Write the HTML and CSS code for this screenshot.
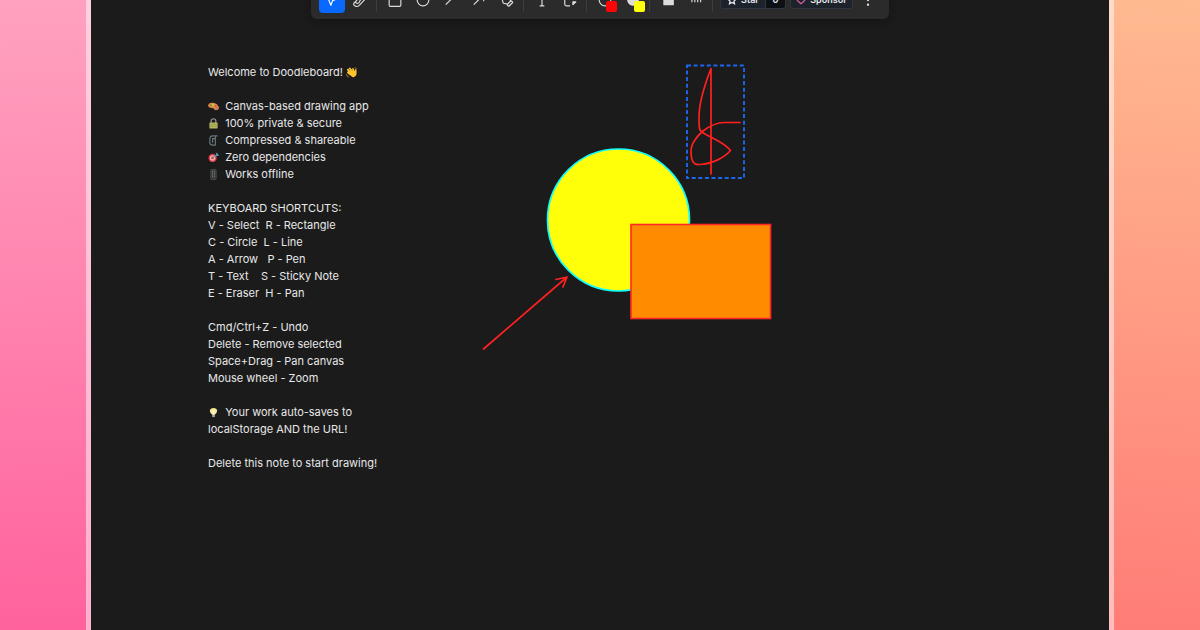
FILE: index.html
```html
<!DOCTYPE html>
<html lang="en">
<head>
<meta charset="utf-8">
<title>Doodleboard</title>
<link rel="stylesheet" href="styles.css">
</head>
<body class="backdrop">
<main class="window">
  <header class="toolbar" role="toolbar" aria-label="Drawing tools">
    <button class="tool tool-active" aria-label="Select"><svg class="icon" viewBox="0 0 24 24"><path d="M3 3l7 18 3-8 8-3z"/></svg></button>
    <button class="tool" aria-label="Eraser"><svg class="icon" viewBox="0 0 24 24"><path d="M23 8L12 20q-3 4-7 3-4-1-4-4 0-2 4-5L16 3M5 14q-1 4 3 4 3-1 4-5l7-7"/></svg></button>
    <span class="divider"></span>
    <button class="tool" aria-label="Rectangle"><svg class="icon" viewBox="0 0 24 24"><rect x="2" y="3" width="20" height="20" rx="2"/></svg></button>
    <button class="tool" aria-label="Circle"><svg class="icon" viewBox="0 0 24 24"><circle cx="12" cy="12" r="10"/></svg></button>
    <button class="tool" aria-label="Line"><svg class="icon" viewBox="0 0 24 24"><path d="M3 20L21 2"/></svg></button>
    <button class="tool" aria-label="Arrow"><svg class="icon" viewBox="0 0 24 24"><path d="M3 20L20 3M9 3h11v11"/></svg></button>
    <button class="tool" aria-label="Pen"><svg class="icon" viewBox="0 0 24 24"><path d="M15.707 22.293a1 1 0 0 1-1.414 0l-1.586-1.586a1 1 0 0 1 0-1.414l5.586-5.586a1 1 0 0 1 1.414 0l1.586 1.586a1 1 0 0 1 0 1.414zM18 14l-1.375-6.874a1 1 0 0 0-.746-.776L3.235 3.028a1 1 0 0 0-1.207 1.207L5.350 16.879a1 1 0 0 0 .776.746L13 19"/></svg></button>
    <span class="divider"></span>
    <button class="tool" aria-label="Text"><svg class="icon" viewBox="0 0 24 24"><path d="M4 6V3h16v3M12 3v19M8 22h8"/></svg></button>
    <button class="tool" aria-label="Sticky note"><svg class="icon" viewBox="0 0 24 24"><path d="M12 22H6q-3 0-3-3V3h19v7"/><path class="solid" d="M17 15h5l-5 5z"/></svg></button>
    <span class="divider"></span>
    <button class="tool" aria-label="Stroke color"><svg class="icon" viewBox="0 0 24 24"><circle cx="12" cy="12" r="10"/></svg><span class="swatch swatch-red"></span></button>
    <button class="tool" aria-label="Fill color"><svg class="icon" viewBox="0 0 24 24"><circle class="solid" cx="12" cy="12" r="9"/></svg><span class="swatch swatch-yellow"></span></button>
    <span class="divider"></span>
    <button class="tool" aria-label="Fill style"><svg class="icon" viewBox="0 0 24 24"><path class="solid" d="M5 5h16v15H5z"/></svg></button>
    <button class="tool" aria-label="Line style"><svg class="icon" viewBox="0 0 24 24"><path d="M4 8h17M5 12v4M10 12v4M15 12v4M20 12v4"/></svg></button>
    <span class="divider"></span>
    <span class="star-group"><a class="badge" href="#star"><svg class="badge-icon" viewBox="0 0 16 16"><path d="M8 2l2 4 4 1-3 3 1 4-4-2-4 2 1-4-3-3 4-1z"/></svg>Star</a><a class="badge badge-count" href="#stars">0</a></span>
    <a class="badge badge-sponsor" href="#sponsor"><svg class="badge-icon heart" viewBox="0 0 16 16"><path d="M8 14Q1 9 1 5q0-3 3-3 3 0 4 3 1-3 4-3 3 0 3 3 0 4-7 9z"/></svg>Sponsor</a>
    <button class="tool" aria-label="More"><svg class="icon" viewBox="0 0 24 24"><circle class="solid" cx="12" cy="4" r="1"/><circle class="solid" cx="12" cy="12" r="1"/><circle class="solid" cx="12" cy="20" r="1"/></svg></button>
  </header>

  <svg class="drawing" viewBox="91 0 700 360" role="img" aria-label="Drawing">
    <circle cx="618.5" cy="220" r="71" fill="#ffff0a" stroke="#1ff" stroke-width="1.7"/>
    <rect x="631" y="224.500" width="139.500" height="94" fill="#ff8c00" stroke="#ff2828" stroke-width="1.6"/>
    <path class="ink" d="M483.500 349L567 277M556 279.500L567 277L563 287"/>
    <path class="ink" d="M711 174V68.500C705 84 699 104 699 117C699 130 699 131 705 134C716 140 725 143 730.500 150.500C724 158 712 164 699 164.500C693 165 691 160 691 151C691 144 697 136 703 131C711 125 717 122.500 724 122.500H740"/>
    <rect x="687" y="65.500" width="57" height="112.500" fill="none" stroke="#1d66ee" stroke-width="1.9" stroke-dasharray="4 2.600"/>
  </svg>

  <p class="note">Welcome to Doodleboard! <svg class="emoji" viewBox="0 0 24 24" role="img" aria-label="waving hand"><path fill="#f9c22e" d="M2 5l3-2 5 6-4-7 3-1 6 7-2-5q2-2 4 0l2 6 1-4q3-1 3 2v9q-2 8-9 6L2 13q0-2 2-2L2 5z"/><path d="M1 16q1 5 5 6M19 1q3 1 4 4" fill="none" stroke="#b88a25" stroke-width="2"/></svg>

<svg class="emoji" viewBox="0 0 24 24" role="img" aria-label="palette"><path fill="#d98b45" d="M0 9q2-6 11-5 9 1 13 10 0 6-7 6-3 0-4-3-1-2-5-2-7 0-8-6z"/><circle cx="6" cy="9" r="2" fill="#4ba647"/><circle cx="11" cy="8" r="2" fill="#e9d33b"/><circle cx="17" cy="11" r="2" fill="#e34442"/><circle cx="19" cy="16" r="2" fill="#a65cd0"/></svg>  Canvas-based drawing app
<svg class="emoji" viewBox="0 0 24 24" role="img" aria-label="lock"><path d="M7 12V6q0-4 5-4t5 4v6" fill="none" stroke="#8b8e8c" stroke-width="3"/><rect x="3" y="10" width="18" height="13" rx="2" fill="#b4b661"/><path d="M4 14h16M4 18h16" stroke="#858946"/></svg>  100% private &amp; secure
<svg class="emoji" viewBox="0 0 24 24" role="img" aria-label="clamp"><path d="M21 2H9Q4 3 4 9v9q1 4 6 4h6V8h-6v9M16 2v20" fill="none" stroke="#66777b" stroke-width="2.500"/></svg>  Compressed &amp; shareable
<svg class="emoji" viewBox="0 0 24 24" role="img" aria-label="target"><circle cx="10" cy="13" r="9" fill="#d93d43"/><circle cx="10" cy="13" r="6" fill="#efb1b3"/><circle cx="10" cy="13" r="3" fill="#d93d43"/><path d="M10 13L19 6l-1-4 5 5-5 1" fill="#48a8c5" stroke="#48a8c5" stroke-width="2"/></svg>  Zero dependencies
<svg class="emoji" viewBox="0 0 24 24" role="img" aria-label="phone"><rect x="6" y="1" width="12" height="22" rx="2" fill="#323536" stroke="#6b7070"/><path d="M9 5h2m2 0h2M9 9h2m2 0h2M9 13h2m2 0h2M9 17h2m2 0h2" stroke="#98a2a8" stroke-width="2"/></svg>  Works offline

KEYBOARD SHORTCUTS:
V - Select  R - Rectangle
C - Circle  L - Line
A - Arrow   P - Pen
T - Text    S - Sticky Note
E - Eraser  H - Pan

Cmd/Ctrl+Z - Undo
Delete - Remove selected
Space+Drag - Pan canvas
Mouse wheel - Zoom

<svg class="emoji" viewBox="0 0 24 24" role="img" aria-label="light bulb"><path d="M9 17Q4 12 4 8q1-6 8-6t8 6q0 4-5 9z" fill="#f8e99a"/><path d="M12 8v9" stroke="#fffbe2" stroke-width="3"/><path d="M9 17h6v5H9z" fill="#a5a397"/></svg>  Your work auto-saves to
localStorage AND the URL!

Delete this note to start drawing!</p>
</main>
</body>
</html>
```

FILE: styles.css
```css
* {
  box-sizing: border-box;
}

.backdrop {
  margin: 0;
  min-height: 100vh;
  display: flex;
  justify-content: center;
  overflow: hidden;
  font-family: Inter, "Liberation Sans", sans-serif;
  background:
    linear-gradient(178deg, #ffa2bf, #ff609c) left / 50% 100% no-repeat,
    linear-gradient(184deg, #ffba90, #ff7976) right / 50% 100% no-repeat;
}

.window {
  position: relative;
  flex: 1;
  margin: 0 86px;
  border: solid rgba(255, 255, 255, 0.5);
  border-width: 0 5px;
  background: #1b1b1b;
  background-clip: padding-box;
  display: flex;
  flex-direction: column;
}

/* The toolbar is docked half above the top edge of the view. */
.toolbar {
  align-self: center;
  display: flex;
  align-items: center;
  gap: 2px;
  height: 38px;
  margin-top: -19px;
  padding: 0 8px;
  border-radius: 6px;
  background: #2b2b2b;
  box-shadow: 0 2px 8px rgba(0, 0, 0, 0.3);
}

.tool {
  position: relative;
  flex: none;
  width: 26px;
  height: 26px;
  padding: 6px;
  border: 0;
  border-radius: 4px;
  background: none;
  color: #dcdcdc;
}

.tool-active {
  background: #0969ff;
  color: #fff;
}

.icon {
  display: block;
  width: 14px;
  height: 14px;
  overflow: visible;
  fill: none;
  stroke: currentColor;
  stroke-width: 2;
  stroke-linejoin: round;
}

.solid {
  fill: currentColor;
}

.divider {
  width: 1px;
  height: 24px;
  margin: 0 3px 0 1px;
  background: #3d3d3d;
}

.swatch {
  position: absolute;
  right: 1px;
  bottom: 1px;
  width: 11px;
  height: 11px;
  border-radius: 2px;
}

.swatch-red {
  background: #ff0505;
}

.swatch-yellow {
  background: #ffff0a;
}

.star-group {
  display: flex;
  margin-left: 2px;
}

.badge {
  display: flex;
  align-items: center;
  justify-content: center;
  gap: 4px;
  width: 46px;
  height: 18px;
  border: 1px solid #30363d;
  border-radius: 3px 0 0 3px;
  background: #1d232b;
  color: #e6e9ed;
  font-size: 9px;
  font-weight: 600;
  line-height: 16px;
  text-decoration: none;
}

.badge-count {
  width: 20px;
  border-left: 0;
  border-radius: 0 3px 3px 0;
  background: #0d1117;
}

.badge-sponsor {
  width: 63px;
  margin-left: 2px;
  border-radius: 3px;
}

.badge-icon {
  width: 10px;
  height: 10px;
  fill: none;
  stroke: currentColor;
  stroke-width: 2;
}

.heart {
  color: #db61a2;
}

.drawing {
  position: absolute;
  top: 0;
  left: 0;
  width: 700px;
  height: 360px;
}

.ink {
  fill: none;
  stroke: #ff2020;
  stroke-width: 1.7px;
  stroke-linecap: round;
  stroke-linejoin: round;
}

.note {
  margin: 45px 0 0 117px;
  color: #e8e8e8;
  font-size: 11px;
  line-height: 17px;
  white-space: pre-wrap;
}

.emoji {
  width: 11px;
  height: 11px;
  vertical-align: -2px;
}
```
